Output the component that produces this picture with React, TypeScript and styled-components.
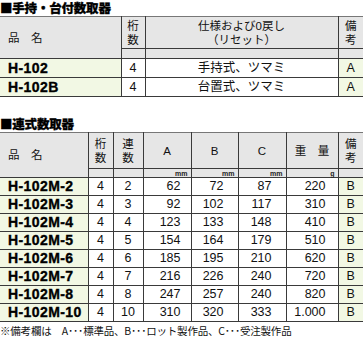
import * as React from 'react'
import styled, { createGlobalStyle, css } from 'styled-components'

const GlobalStyle = createGlobalStyle`
  html, body {
    margin: 0;
    padding: 0;
    background: #ffffff;
  }
  body {
    font-family: 'Liberation Sans', 'Noto Sans CJK JP', sans-serif;
    color: #111;
  }
`

const Page = styled.div`
  width: 363px;
  display: flex;
  flex-direction: column;
`

const SectionTitle = styled.h2<{ $gap?: number }>`
  margin: ${({ $gap }) => $gap ?? 0}px 0 0 0;
  font-family: 'Noto Sans CJK JP', sans-serif;
  font-size: 12.5px;
  font-weight: 900;
  line-height: 16px;
  letter-spacing: -0.2px;
  color: #000;
  -webkit-text-stroke: 0.3px #000;
`

const Table = styled.table`
  width: 363px;
  border-collapse: collapse;
  table-layout: fixed;
  border-top: 1px solid #777;
`

type Align = 'left' | 'center' | 'right'

const HeadCell = styled.th<{ $align?: Align; $h?: number }>`
  background: #e6e6e6;
  border: 1px solid #3a3a3a;
  border-top: none;
  padding: 0;
  height: ${({ $h }) => $h ?? 10}px;
  text-align: ${({ $align }) => $align ?? 'center'};
  font-family: 'Liberation Sans', 'Noto Sans CJK JP', sans-serif;
  font-size: 11.5px;
  font-weight: normal;
  line-height: 14px;
  color: #111;
  &:first-child {
    border-left: none;
    padding-left: 8px;
  }
  &:last-child {
    border-right: none;
  }
`

const Unit = styled.th`
  background: #e6e6e6;
  border: 1px solid #3a3a3a;
  padding: 0 3px 0 0;
  height: 8px;
  text-align: right;
  vertical-align: bottom;
  font-family: 'Liberation Sans', sans-serif;
  font-size: 7px;
  font-weight: bold;
  line-height: 7px;
  color: #222;
  &:last-child {
    border-right: none;
  }
`

const Cell = styled.td<{ $align?: Align; $tone?: 'green'; $pad?: number }>`
  border: 1px solid #3a3a3a;
  padding: 0 ${({ $pad }) => $pad ?? 0}px 0 0;
  text-align: ${({ $align }) => $align ?? 'center'};
  font-family: 'Liberation Sans', 'Noto Sans CJK JP', sans-serif;
  font-size: 12.5px;
  line-height: 15px;
  color: #111;
  ${({ $tone }) =>
    $tone === 'green' &&
    css`
      background: #f2f8e4;
    `}
  &:first-child {
    border-left: none;
  }
  &:last-child {
    border-right: none;
  }
`

const ModelCell = styled(Cell)`
  padding-left: 8px;
  font-size: 14px;
  font-weight: bold;
  letter-spacing: 0.4px;
  -webkit-text-stroke: 0.35px #000;
  color: #000;
`

const Row = styled.tr<{ $h: number }>`
  height: ${({ $h }) => $h}px;
`

const Note = styled.p`
  margin: 3px 0 0 0;
  font-family: 'Noto Sans CJK JP', sans-serif;
  font-size: 10.5px;
  line-height: 11px;
  letter-spacing: -0.2px;
  color: #111;
  white-space: nowrap;
`

const Stack = ({ chars }: { chars: string[] }) => (
  <>
    {chars.map((c, i) => (
      <React.Fragment key={c}>
        {i > 0 && <br />}
        {c}
      </React.Fragment>
    ))}
  </>
)

const handheld = [
  { model: 'H-102', digits: 4, spec: '手持式、ツマミ', note: 'A' },
  { model: 'H-102B', digits: 4, spec: '台置式、ツマミ', note: 'A' }
]

const multi = [
  { model: 'H-102M-2', units: 2, a: 62, b: 72, c: 87, w: '220' },
  { model: 'H-102M-3', units: 3, a: 92, b: 102, c: 117, w: '310' },
  { model: 'H-102M-4', units: 4, a: 123, b: 133, c: 148, w: '410' },
  { model: 'H-102M-5', units: 5, a: 154, b: 164, c: 179, w: '510' },
  { model: 'H-102M-6', units: 6, a: 185, b: 195, c: 210, w: '620' },
  { model: 'H-102M-7', units: 7, a: 216, b: 226, c: 240, w: '720' },
  { model: 'H-102M-8', units: 8, a: 247, b: 257, c: 240, w: '820' },
  { model: 'H-102M-10', units: 10, a: 310, b: 320, c: 333, w: '1.000' }
]

export default function App() {
  return (
    <Page>
      <GlobalStyle />
      <SectionTitle>■手持・台付数取器</SectionTitle>
      <Table>
        <colgroup>
          <col style={{ width: 121 }} />
          <col style={{ width: 24 }} />
          <col style={{ width: 193 }} />
          <col style={{ width: 25 }} />
        </colgroup>
        <thead>
          <tr>
            <HeadCell rowSpan={2} $align="left">
              品　名
            </HeadCell>
            <HeadCell $h={31}>
              <Stack chars={['桁', '数']} />
            </HeadCell>
            <HeadCell $h={31}>
              仕様および0戻し
              <br />
              （リセット）
            </HeadCell>
            <HeadCell $h={31}>
              <Stack chars={['備', '考']} />
            </HeadCell>
          </tr>
          <tr>
            <HeadCell $h={9} />
            <HeadCell $h={9} />
            <HeadCell $h={9} />
          </tr>
        </thead>
        <tbody>
          {handheld.map((r) => (
            <Row key={r.model} $h={19}>
              <ModelCell $align="left" $tone="green">
                {r.model}
              </ModelCell>
              <Cell>{r.digits}</Cell>
              <Cell>{r.spec}</Cell>
              <Cell $tone="green">{r.note}</Cell>
            </Row>
          ))}
        </tbody>
      </Table>

      <SectionTitle $gap={19}>■連式数取器</SectionTitle>
      <Table>
        <colgroup>
          <col style={{ width: 88 }} />
          <col style={{ width: 25 }} />
          <col style={{ width: 30 }} />
          <col style={{ width: 48 }} />
          <col style={{ width: 47 }} />
          <col style={{ width: 48 }} />
          <col style={{ width: 52 }} />
          <col style={{ width: 25 }} />
        </colgroup>
        <thead>
          <tr>
            <HeadCell rowSpan={2} $align="left">
              品　名
            </HeadCell>
            <HeadCell $h={35}>
              <Stack chars={['桁', '数']} />
            </HeadCell>
            <HeadCell $h={35}>
              <Stack chars={['連', '数']} />
            </HeadCell>
            <HeadCell $h={35}>A</HeadCell>
            <HeadCell $h={35}>B</HeadCell>
            <HeadCell $h={35}>C</HeadCell>
            <HeadCell $h={35}>重　量</HeadCell>
            <HeadCell $h={35}>
              <Stack chars={['備', '考']} />
            </HeadCell>
          </tr>
          <tr>
            <Unit />
            <Unit />
            <Unit>mm</Unit>
            <Unit>mm</Unit>
            <Unit>mm</Unit>
            <Unit>g</Unit>
            <Unit />
          </tr>
        </thead>
        <tbody>
          {multi.map((r) => (
            <Row key={r.model} $h={18}>
              <ModelCell $align="left" $tone="green">
                {r.model}
              </ModelCell>
              <Cell>4</Cell>
              <Cell>{r.units}</Cell>
              <Cell $align="right" $pad={10}>
                {r.a}
              </Cell>
              <Cell $align="right" $pad={14}>
                {r.b}
              </Cell>
              <Cell $align="right" $pad={14}>
                {r.c}
              </Cell>
              <Cell $align="right" $pad={12}>
                {r.w}
              </Cell>
              <Cell $tone="green">B</Cell>
            </Row>
          ))}
        </tbody>
      </Table>
      <Note>※備考欄は　A･･･標準品、B･･･ロット製作品、C･･･受注製作品</Note>
    </Page>
  )
}
